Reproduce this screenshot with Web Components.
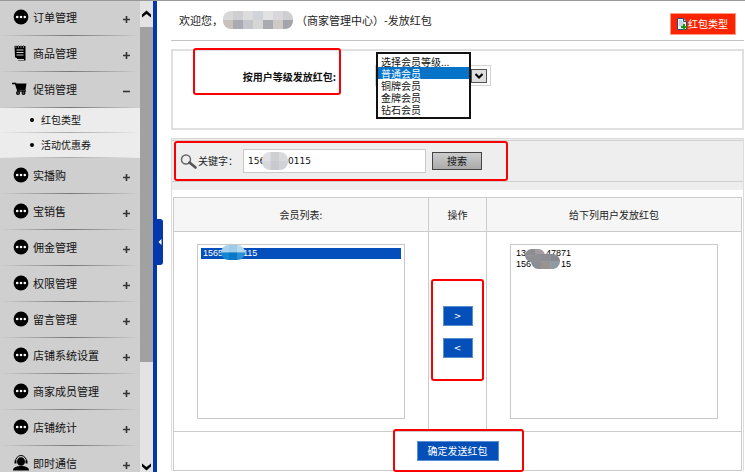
<!DOCTYPE html>
<html lang="zh-CN">
<head>
<meta charset="utf-8">
<title>发放红包</title>
<style>
  html, body {
    height: 100%;
    margin: 0;
  }
  body {
    font-family: "Noto Sans CJK SC", "Liberation Sans", sans-serif;
    font-size: 10px;
    line-height: 12px;
    color: #222;
    background: #fff;
    overflow: hidden;
  }
</style>
</head>
<body>
<admin-layout>
  <side-menu slot="menu">
    <menu-item icon="dots">订单管理</menu-item>
    <menu-item icon="note">商品管理</menu-item>
    <menu-item icon="cart" open>促销管理
      <menu-link slot="links">红包类型</menu-link>
      <menu-link slot="links">活动优惠券</menu-link>
    </menu-item>
    <menu-item icon="dots">实播购</menu-item>
    <menu-item icon="dots">宝销售</menu-item>
    <menu-item icon="dots">佣金管理</menu-item>
    <menu-item icon="dots">权限管理</menu-item>
    <menu-item icon="dots">留言管理</menu-item>
    <menu-item icon="dots">店铺系统设置</menu-item>
    <menu-item icon="dots">商家成员管理</menu-item>
    <menu-item icon="dots">店铺统计</menu-item>
    <menu-item icon="service">即时通信</menu-item>
  </side-menu>
  <page-header></page-header>
  <level-panel></level-panel>
  <member-panel></member-panel>
</admin-layout>

<script>
const ICONS = {
  dots: `<svg width="16" height="16" viewBox="0 0 16 16"><circle cx="8" cy="8" r="7.4" fill="#000"/><g fill="#fff"><circle cx="4.2" cy="8" r="1.3"/><circle cx="8" cy="8" r="1.3"/><circle cx="11.8" cy="8" r="1.3"/></g></svg>`,
  note: `<svg width="16" height="16" viewBox="0 0 16 16"><path d="M1.500 1h11v14.500H5.500l-3.500-3.500z" fill="#000"/><path d="M3.500 13v1.500h7.500" fill="none" stroke="#cfcfcf"/><path d="M3.500 5h7M3.500 7.500h7M3.500 10h7" stroke="#cfcfcf" stroke-width="1"/><path d="M3 0v3M5.500 0v3M8 0v3M10.500 0v3" stroke="#777"/></svg>`,
  cart: `<svg width="16" height="16" viewBox="0 0 16 16"><path d="M-1 2.500h3.500l2.500 7.500H13" fill="none" stroke="#000" stroke-width="1.500"/><path d="M2.500 2.500H13.500l-1 6.500H4.500z" fill="#000"/><circle cx="5" cy="12" r="1.400" fill="#888" stroke="#000" stroke-width="1.200"/><circle cx="10.500" cy="12" r="1.400" fill="#888" stroke="#000" stroke-width="1.200"/></svg>`,
  service: `<svg width="16" height="16" viewBox="0 0 16 16"><path d="M2.500 6.500a5.500 6 0 0 1 11 0" fill="none" stroke="#000" stroke-width="1"/><ellipse cx="8" cy="6.500" rx="4" ry="4.300" fill="#000"/><path d="M1.500 5.500h2v3h-2zM12.500 5.500h2v3h-2z" fill="#000"/><path d="M0 15.500c0-3 3-4.500 8-4.500s8 1.500 8 4.500z" fill="#000"/></svg>`
};

function define(name, html, init) {
  customElements.define(name, class extends HTMLElement {
    connectedCallback() {
      if (this.shadowRoot) return;
      this.attachShadow({ mode: 'open' });
      this.shadowRoot.innerHTML = html;
      if (init) init(this, this.shadowRoot);
    }
  });
}

define('admin-layout', `
  <style>
    :host {
      display: flex;
      height: 100vh;
      position: relative;
      overflow: hidden;
    }
    :host::before {
      content: "";
      position: absolute;
      inset: 0 0 auto 0;
      height: 1px;
      background: #999;
      z-index: 3;
    }
    .divider {
      flex: none;
      width: 4px;
      box-sizing: border-box;
      padding-top: 12px;
      background: #0436ac;
      display: flex;
      align-items: center;
    }
    .handle {
      flex: none;
      width: 10px;
      height: 46px;
      padding: 0 0 0 5px;
      border: 0;
      border-radius: 0 3px 3px 0;
      background: #0436ac;
      display: flex;
      align-items: center;
    }
    main {
      flex: 1;
      min-width: 0;
      display: flex;
      flex-direction: column;
      gap: 8px;
      padding: 0 1px 0 14px;
    }
  </style>
  <slot name="menu"></slot>
  <div class="divider">
    <button class="handle" aria-label="收起菜单"><svg width="4" height="6" viewBox="0 0 4 6"><path d="M3.500 0v6L.5 3z" fill="#fff"/></svg></button>
  </div>
  <main><slot></slot></main>
`);

define('side-menu', `
  <style>
    :host {
      display: flex;
      flex: none;
      width: 153px;
      background: #cfcfcf;
    }
    nav {
      flex: 1;
      overflow: hidden;
    }
    .rail {
      width: 13px;
      background: #e3e3e3;
      display: flex;
      flex-direction: column;
    }
    .rail button {
      flex: none;
      border: 0;
      padding: 0;
      background: none;
      display: flex;
      justify-content: center;
    }
    .up {
      height: 27px;
      align-items: center;
      padding-top: 8px;
    }
    .down {
      height: 10px;
      align-items: center;
    }
    .track {
      flex: 1;
    }
    .thumb {
      height: 77%;
      background: #a1a1a1;
    }
  </style>
  <nav><slot></slot></nav>
  <div class="rail">
    <button class="up" aria-label="向上"><svg width="9" height="8" viewBox="0 0 9 8"><path d="M0 7.500V4.500L4.500.5 9 4.500v3L4.500 4z" fill="#000"/></svg></button>
    <div class="track"><div class="thumb"></div></div>
    <button class="down" aria-label="向下"><svg width="9" height="8" viewBox="0 0 9 8"><path d="M0 .5v3l4.500 4 4.500-4v-3L4.500 4z" fill="#000"/></svg></button>
  </div>
`);

define('menu-item', `
  <style>
    :host {
      display: block;
    }
    button {
      width: 100%;
      height: 36px;
      border: 0;
      padding: 0 10px 2px 13px;
      display: flex;
      align-items: center;
      gap: 4px;
      font: inherit;
      font-size: 11px;
      color: #111;
      text-align: left;
      background: linear-gradient(90deg, #cfcfcf, #777 50%, #cfcfcf) bottom / 100% 1px no-repeat #cfcfcf;
    }
    svg {
      display: block;
      flex: none;
      overflow: visible;
    }
    .label {
      flex: 1;
    }
    .sign {
      padding-top: 4px;
    }
  </style>
  <button><span class="icon"></span><span class="label"><slot></slot></span><span class="sign"></span></button>
  <slot name="links"></slot>
`, (host, root) => {
  const open = host.hasAttribute('open');
  root.querySelector('button').setAttribute('aria-expanded', open);
  root.querySelector('.icon').innerHTML = ICONS[host.getAttribute('icon')];
  root.querySelector('.sign').innerHTML =
    `<svg width="7" height="7" viewBox="0 0 7 7"><path d="${open ? 'M0 3.500h7' : 'M0 3.500h7M3.500 0v7'}" stroke="#333" stroke-width="1.600"/></svg>`;
});

define('menu-link', `
  <style>
    :host {
      display: block;
    }
    a {
      display: flex;
      align-items: center;
      gap: 7px;
      height: 23px;
      padding: 0 0 2px 30px;
      color: #111;
      text-decoration: none;
      background: linear-gradient(90deg, #ececec, #aaa 50%, #ececec) bottom / 100% 1px no-repeat #ececec;
    }
    a::before {
      content: "";
      width: 4px;
      height: 4px;
      border-radius: 50%;
      background: #000;
    }
  </style>
  <a href="#"><slot></slot></a>
`);

// pixelated patch that hides private data; colours are listed row by row
define('mosaic-patch', `
  <style>
    :host {
      display: block;
      overflow: hidden;
      border-radius: 8px;
      pointer-events: none;
    }
    svg {
      display: block;
      width: 100%;
      height: 100%;
    }
  </style>
`, (host, root) => {
  const rows = host.getAttribute('colors').split('/').map(r => r.split(' '));
  const cells = rows.map((r, y) => r.map((c, x) => `<rect x="${x}" y="${y}" width="1.05" height="1.05" fill="#${c}"/>`).join('')).join('');
  root.innerHTML += `<svg viewBox="0 0 ${rows[0].length} ${rows.length}" preserveAspectRatio="none">${cells}</svg>`;
});

// red highlight frame drawn over its positioned parent
define('red-frame', `
  <style>
    :host {
      position: absolute;
      box-sizing: border-box;
      border: 2px solid #fa0000;
      border-radius: 3px;
      pointer-events: none;
      z-index: 2;
    }
  </style>
`);

define('page-header', `
  <style>
    :host {
      display: flex;
      align-items: center;
      justify-content: space-between;
      box-sizing: border-box;
      height: 41px;
      padding: 7px 8px 0 8px;
      border-bottom: 1px solid #c4c4c4;
    }
    h1 {
      margin: 0;
      display: flex;
      align-items: center;
      padding-bottom: 7px;
      font-size: 11px;
      font-weight: 400;
    }
    mosaic-patch {
      width: 70px;
      height: 18px;
      margin-right: 3px;
    }
    a {
      display: flex;
      align-items: center;
      gap: 1px;
      height: 20px;
      padding: 0 7px 0 6px;
      border: 1px solid #ff9a85;
      background: #fb2400;
      color: #fff;
      text-decoration: none;
    }
  </style>
  <h1>欢迎您，<mosaic-patch colors="d8d8d8 cfcfd2 dcdcdc d0d4da e2e2e2 d8d8da cfcfd2/c9c2bb a9aab4 c5c6cc d6d6d6 aaaab2 ccc9c6 a3a5aa"></mosaic-patch>（商家管理中心）-发放红包</h1>
  <a href="#"><svg width="10" height="12" viewBox="0 0 10 12"><path d="M.5.5h6l3 3v8h-9z" fill="#eef3fa" stroke="#33476b"/><path d="M2 3h3M2 5h5M2 7h4" stroke="#9fb0cc"/><path d="M6.500 .5v3h3" fill="#b9c8e0" stroke="#33476b"/><path d="M7 6v6M4 9h6" stroke="#16961b" stroke-width="2"/></svg>红包类型</a>
`);

define('level-panel', `
  <style>
    :host {
      display: flex;
      align-items: flex-start;
      box-sizing: border-box;
      height: 81px;
      border: 2px solid #e0e0e0;
      position: relative;
    }
    label {
      width: 163px;
      padding-top: 20px;
      text-align: right;
      font-weight: 700;
      color: #111;
    }
    red-frame {
      left: 20px;
      top: -3px;
      width: 148px;
      height: 47px;
    }
    .combo {
      position: relative;
      box-sizing: border-box;
      width: 116px;
      height: 21px;
      margin: 14px 0 0 39px;
      padding: 0 3px;
      border: 1px solid #d4d4d4;
      display: flex;
      align-items: center;
      justify-content: flex-end;
    }
    .combo button {
      width: 16px;
      height: 14px;
      padding: 0;
      border: 1px solid #555;
      background: #dedede;
      display: flex;
      align-items: center;
      justify-content: center;
    }
    select {
      position: absolute;
      left: 0;
      top: -14px;
      width: 95px;
      height: 67px;
      box-sizing: border-box;
      padding: 1px 0 0;
      border: 2px solid #111;
      border-radius: 0;
      background: #fff;
      font: inherit;
      color: #111;
      overflow: hidden;
      outline: 0;
    }
    option {
      display: flex;
      align-items: center;
      height: 12px;
      min-height: 12px;
      line-height: 12px;
      padding: 0 0 0 3px;
    }
    option:checked {
      background: linear-gradient(#0473c8, #0473c8);
      color: #fff;
      -webkit-text-fill-color: #fff;
    }
  </style>
  <label for="level">按用户等级发放红包:</label>
  <div class="combo">
    <button aria-label="展开"><svg width="8" height="6" viewBox="0 0 8 6"><path d="M.5 1L4 4.500 7.500 1" fill="none" stroke="#000" stroke-width="2"/></svg></button>
    <select id="level" size="5">
      <option>选择会员等级...</option>
      <option selected>普通会员</option>
      <option>铜牌会员</option>
      <option>金牌会员</option>
      <option>钻石会员</option>
    </select>
  </div>
  <red-frame></red-frame>
`);

define('search-bar', `
  <style>
    :host {
      display: block;
      padding: 1px 0 8px;
      border-top: 1px solid #d8d8d8;
      background: #eee;
    }
    form {
      position: relative;
      box-sizing: border-box;
      height: 42px;
      display: flex;
      align-items: center;
      padding: 0 8px;
      border: 1px solid #d0d0d0;
      border-width: 1px 0;
    }
    svg {
      margin-right: 1px;
    }
    .field {
      position: relative;
      margin: 0 6px 0 5px;
    }
    input {
      display: block;
      box-sizing: border-box;
      width: 183px;
      height: 24px;
      padding: 0 4px;
      border: 1px solid #c9c9c9;
      background: #fff;
      font: 9px "DejaVu Sans", sans-serif;
      color: #111;
    }
    .field mosaic-patch {
      position: absolute;
      left: 19px;
      top: 3px;
      width: 26px;
      height: 18px;
    }
    button {
      width: 50px;
      height: 18px;
      padding: 0;
      border: 1px solid #444;
      background: linear-gradient(#ccc, #aaa);
      font: inherit;
      line-height: 14px;
      color: #111;
    }
    red-frame {
      left: 2px;
      top: 0;
      width: 334px;
      height: 40px;
    }
  </style>
  <form>
    <svg width="17" height="15" viewBox="0 0 17 15"><circle cx="6" cy="5.500" r="4.500" fill="none" stroke="#666" stroke-width="1.500"/><path d="M9.500 8.500l6 5" stroke="#555" stroke-width="2.600" stroke-linecap="round"/></svg>
    <label for="keyword">关键字：</label>
    <div class="field">
      <input id="keyword" type="text" value="156&nbsp;&nbsp;&nbsp;&nbsp;&nbsp;&nbsp;&nbsp;&nbsp;0115">
      <mosaic-patch colors="dfe1e4 cfcfd2 d9dadd/d6d8db c9cace cfd3d8"></mosaic-patch>
    </div>
    <button type="button">搜索</button>
    <red-frame></red-frame>
  </form>
`);

define('member-panel', `
  <style>
    :host {
      display: block;
      border: 1px solid #dcdcdc;
      border-width: 0 1px;
    }
    table {
      width: calc(100% - 2px);
      margin: 7px 1px 0;
      border-collapse: collapse;
      table-layout: fixed;
    }
    th, td {
      border: 1px solid #cbcbcb;
      padding: 0;
      text-align: center;
      font-weight: 400;
    }
    th {
      height: 33px;
      background: #f6f6f6;
    }
    .ops {
      width: 57px;
    }
    .lists td {
      height: 199px;
      position: relative;
    }
    .holder {
      position: relative;
      margin: 0 23px;
    }
    select {
      display: block;
      box-sizing: border-box;
      width: 100%;
      height: 175px;
      padding: 3px;
      border: 1px solid #c8c8c8;
      border-radius: 0;
      background: #fff;
      font: 9px "Liberation Sans", sans-serif;
      color: #000;
      overflow: hidden;
      outline: 0;
    }
    option {
      height: 11px;
      min-height: 11px;
      line-height: 11px;
      padding: 0 2px;
    }
    option:checked {
      background: linear-gradient(#044fbb, #044fbb);
      color: #fff;
      -webkit-text-fill-color: #fff;
    }
    .holder mosaic-patch {
      position: absolute;
    }
    .one {
      left: 24px;
      top: 1px;
      width: 24px;
      height: 15px;
    }
    .two {
      left: 15px;
      top: 5px;
      width: 20px;
      height: 13px;
    }
    .three {
      left: 21px;
      top: 10px;
      width: 29px;
      height: 15px;
    }
    .moves {
      display: flex;
      flex-direction: column;
      align-items: center;
      gap: 12px;
    }
    .moves button, .send {
      height: 20px;
      padding: 0;
      border: 1px solid #5a8fd6;
      background: #044fb8;
      color: #fff;
      font: inherit;
      line-height: 16px;
    }
    .moves button {
      width: 30px;
      font-family: "DejaVu Sans", sans-serif;
      font-size: 9px;
    }
    .lists red-frame {
      left: 2px;
      top: 47px;
      width: 53px;
      height: 102px;
    }
    .foot td {
      height: 38px;
      position: relative;
    }
    .send {
      width: 82px;
    }
    .foot red-frame {
      left: calc(50% - 65px);
      top: -3px;
      width: 131px;
      height: 43px;
    }
  </style>
  <search-bar></search-bar>
  <table>
    <tr><th id="from">会员列表:</th><th class="ops">操作</th><th id="to">给下列用户发放红包</th></tr>
    <tr class="lists">
      <td>
        <div class="holder">
          <select multiple aria-labelledby="from">
            <option selected>1565&nbsp;&nbsp;&nbsp;&nbsp;&nbsp;&nbsp;&nbsp;&nbsp;115</option>
          </select>
          <mosaic-patch class="one" colors="a9d3ec 9fcbe6 b5d9ee/1485d2 0a78c8 2a8fd4"></mosaic-patch>
        </div>
      </td>
      <td>
        <div class="moves"><button aria-label="添加">&gt;</button><button aria-label="移除">&lt;</button></div>
        <red-frame></red-frame>
      </td>
      <td>
        <div class="holder">
          <select multiple aria-labelledby="to">
            <option>13&nbsp;&nbsp;&nbsp;&nbsp;&nbsp;&nbsp;&nbsp;&nbsp;47871</option>
            <option>156&nbsp;&nbsp;&nbsp;&nbsp;&nbsp;&nbsp;&nbsp;&nbsp;&nbsp;&nbsp;&nbsp;&nbsp;15</option>
          </select>
          <mosaic-patch class="two" colors="8c8c92 a39ba0/909096 9c969c"></mosaic-patch>
          <mosaic-patch class="three" colors="8f9096 8c8c94 85888f/8b8d95 99938f 8e9aa3"></mosaic-patch>
        </div>
      </td>
    </tr>
    <tr class="foot">
      <td colspan="3"><button class="send">确定发送红包</button><red-frame></red-frame></td>
    </tr>
  </table>
`);
</script>
</body>
</html>
